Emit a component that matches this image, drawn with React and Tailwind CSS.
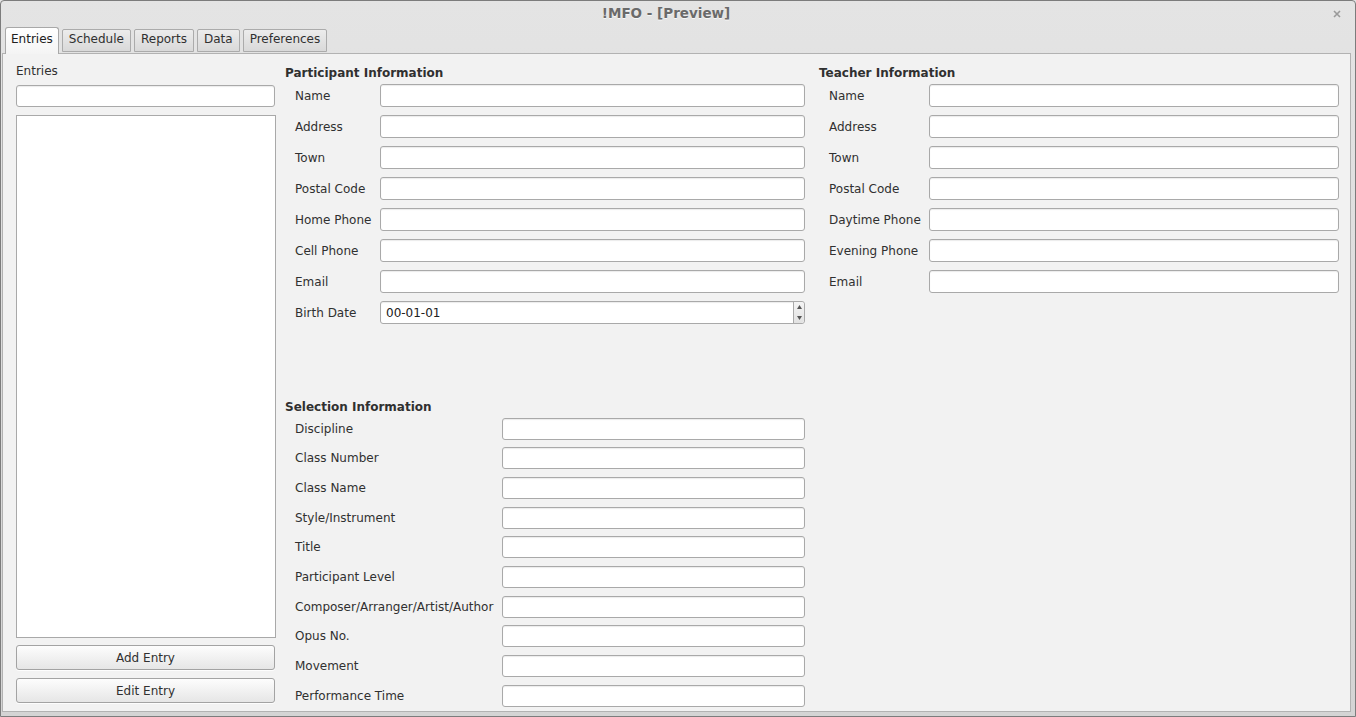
import React from 'react';

const participantFields = ['Name', 'Address', 'Town', 'Postal Code', 'Home Phone', 'Cell Phone', 'Email'];
const teacherFields = ['Name', 'Address', 'Town', 'Postal Code', 'Daytime Phone', 'Evening Phone', 'Email'];
const selectionFields = [
  'Discipline',
  'Class Number',
  'Class Name',
  'Style/Instrument',
  'Title',
  'Participant Level',
  'Composer/Arranger/Artist/Author',
  'Opus No.',
  'Movement',
  'Performance Time',
];
const tabs = ['Schedule', 'Reports', 'Data', 'Preferences'];

const inputCls =
  'bg-white border border-[#a9a9a9] rounded-[3px] shadow-[inset_0_1px_1px_rgba(0,0,0,0.08)]';

const FieldRow = ({ label, labelW, inputW }) => (
  <div className="flex items-center h-[23px]">
    <div className="pl-[10px] shrink-0" style={{ width: labelW }}>{label}</div>
    <div className={`${inputCls} h-[23px]`} style={{ width: inputW }} />
  </div>
);

const Button = ({ children }) => (
  <div className="h-[25px] w-[259px] flex items-center justify-center rounded-[3px] border border-[#a3a3a3] bg-gradient-to-b from-[#fdfdfd] to-[#e6e6e6] shadow-[0_1px_0_rgba(255,255,255,0.8)]">
    {children}
  </div>
);

export default function App() {
  return (
    <div className="w-[1356px] h-[717px] overflow-hidden font-['DejaVu_Sans',sans-serif] text-[12px] text-[#303030] bg-[#e6e6e6]">
      <div className="w-full h-full flex flex-col border border-[#7c7c7c] rounded-t-[4px] bg-gradient-to-b from-[#e4e4e4] to-[#d4d4d4]">
        {/* title bar */}
        <div className="h-[25px] shrink-0 flex items-center relative">
          <div className="flex-1 text-center font-bold text-[13.5px] text-[#6a6a6a] [text-shadow:0_1px_0_rgba(255,255,255,0.7)] pr-[24px]">
            !MFO - [Preview]
          </div>
          <svg className="absolute right-[14px] top-[9px]" width="8" height="8" viewBox="0 0 8 8">
            <path d="M1 1 L7 7 M7 1 L1 7" stroke="#9a9a9a" strokeWidth="1.6" />
          </svg>
        </div>

        {/* tabs */}
        <div className="h-[27px] shrink-0 flex items-end pl-[4px] gap-[3px]">
          <div className="h-[27px] px-[5px] flex items-start pt-[2px] bg-gradient-to-b from-[#ffffff] to-[#f4f4f4] border border-b-0 border-[#a8a8a8] rounded-t-[3px] relative top-[1px] z-10 text-[#202020]">
            Entries
          </div>
          {tabs.map((t) => (
            <div
              key={t}
              className="h-[23px] mb-[1px] px-[6px] pb-[3px] flex items-center bg-gradient-to-b from-[#ececec] to-[#d9d9d9] border border-[#ababab] rounded-t-[2px] text-[#303030]"
            >
              {t}
            </div>
          ))}
        </div>

        {/* pane */}
        <div className="flex-1 ml-[1px] mr-[4px] mb-[5px] border border-[#b2b2b2] bg-[#f2f2f2] flex pl-[13px] pt-[9px]">
          {/* left column */}
          <div className="w-[260px] flex flex-col shrink-0">
            <div className="h-[14px] leading-[14px] mt-[1px]">Entries</div>
            <div className={`${inputCls} h-[22px] w-[259px] mt-[7px]`} />
            <div className="h-[523px] w-[260px] mt-[8px] bg-white border border-[#a9a9a9]" />
            <div className="mt-[7px] flex flex-col gap-[8px]">
              <Button>Add Entry</Button>
              <Button>Edit Entry</Button>
            </div>
          </div>

          {/* participant + selection */}
          <div className="w-[520px] ml-[9px] shrink-0 flex flex-col">
            <div className="font-bold h-[14px] leading-[14px] mt-[3px]">Participant Information</div>
            <div className="flex flex-col gap-[8px] mt-[4px]">
              {participantFields.map((f) => (
                <FieldRow key={f} label={f} labelW={95} inputW={425} />
              ))}
              <div className="flex items-center h-[23px]">
                <div className="pl-[10px] w-[95px] shrink-0">Birth Date</div>
                <div className={`${inputCls} h-[23px] w-[425px] flex items-stretch`}>
                  <div className="flex-1 flex items-center pl-[5px] text-[#202020]">00-01-01</div>
                  <div className="w-[11px] border-l border-[#a9a9a9] bg-gradient-to-b from-[#f4f4f4] to-[#e2e2e2] flex flex-col items-center justify-between py-[3px] rounded-r-[3px]">
                    <svg width="5" height="4" viewBox="0 0 5 4"><path d="M2.5 0 L5 4 L0 4 Z" fill="#555" /></svg>
                    <svg width="5" height="4" viewBox="0 0 5 4"><path d="M0 0 L5 0 L2.5 4 Z" fill="#555" /></svg>
                  </div>
                </div>
              </div>
            </div>

            <div className="font-bold h-[14px] leading-[14px] mt-[76px]">Selection Information</div>
            <div className="flex flex-col">
              {selectionFields.map((f) => (
                <div key={f} className="flex items-center h-[29.67px]">
                  <div className="pl-[10px] w-[217px] shrink-0">{f}</div>
                  <div className={`${inputCls} h-[22px] w-[303px]`} />
                </div>
              ))}
            </div>
          </div>

          {/* teacher */}
          <div className="w-[520px] ml-[14px] shrink-0 flex flex-col">
            <div className="font-bold h-[14px] leading-[14px] mt-[3px]">Teacher Information</div>
            <div className="flex flex-col gap-[8px] mt-[4px]">
              {teacherFields.map((f) => (
                <FieldRow key={f} label={f} labelW={110} inputW={410} />
              ))}
            </div>
          </div>
        </div>
      </div>
    </div>
  );
}
